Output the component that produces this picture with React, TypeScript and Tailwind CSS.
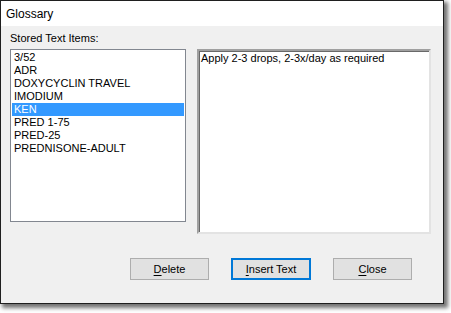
import React from 'react';

const items = ['3/52', 'ADR', 'DOXYCYCLIN TRAVEL', 'IMODIUM', 'KEN', 'PRED 1-75', 'PRED-25', 'PREDNISONE-ADULT'];
const selected = 'KEN';

const Button: React.FC<{ hot: string; rest: string; focused?: boolean }> = ({ hot, rest, focused }) => (
  <button
    className={
      focused
        ? 'flex h-[22px] w-[80px] items-center justify-center border-2 border-[#0078d7] bg-[#e1e1e1] text-[11px] leading-none text-black'
        : 'flex h-[22px] w-[79px] items-center justify-center border border-[#adadad] bg-[#e1e1e1] text-[11px] leading-none text-black'
    }
  >
    <span className="underline underline-offset-2">{hot}</span>
    {rest}
  </button>
);

const App: React.FC = () => {
  return (
    <div className="h-[313px] w-[451px] bg-white font-['Liberation_Sans',Arial,sans-serif]">
      <div className="flex h-[304px] w-[444px] flex-col border border-[#1f1f1f] shadow-[3px_3px_4px_1px_rgba(0,0,0,0.55)]">
        {/* title bar */}
        <div className="flex h-[25px] items-center bg-white pl-[5px] text-[12px] text-black">Glossary</div>

        {/* body */}
        <div className="flex flex-1 flex-col bg-[#f0f0f0] pl-[9px] pr-[12px]">
          <div className="mt-[6px] h-[13px] text-[11px] leading-[13px] text-black">Stored Text Items:</div>

          <div className="mt-[4px] flex items-start gap-[11px]">
            <div className="h-[173px] w-[176px] border border-[#828790] bg-white p-px">
              {items.map((it) => (
                <div
                  key={it}
                  className={
                    it === selected
                      ? 'h-[13px] bg-[#3399ff] pl-[2px] text-[11px] leading-[13px] text-white'
                      : 'h-[13px] pl-[2px] text-[11px] leading-[13px] text-black'
                  }
                >
                  {it}
                </div>
              ))}
            </div>

            <div className="h-[185px] w-[234px] border-2 border-t-[#a0a0a0] border-l-[#a0a0a0] border-r-[#e3e3e3] border-b-[#e3e3e3] bg-white">
              <div className="h-full w-full border-l border-t border-[#696969] pl-px text-[11px] leading-[13px] text-black">
                Apply 2-3 drops, 2-3x/day as required
              </div>
            </div>
          </div>

          <div className="mt-[24px] flex justify-end gap-[22px] pr-[19px]">
            <Button hot="D" rest="elete" />
            <Button hot="I" rest="nsert Text" focused />
            <Button hot="C" rest="lose" />
          </div>
        </div>
      </div>
    </div>
  );
};

export default App;
